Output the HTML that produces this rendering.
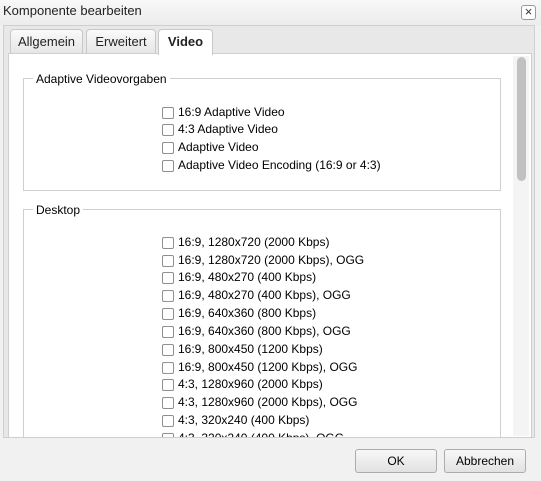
<html><head><style>
body{margin:0;width:541px;height:480px;background:#f1f1f1;font-family:"Liberation Sans",sans-serif;font-size:12px;color:#000;position:relative;overflow:hidden}
.a{position:absolute}
.cb{position:absolute;left:162px;width:10px;height:10px;border:1px solid #8f8f8f;border-radius:2px;background:#fff}
.lb{position:absolute;left:178px;white-space:nowrap}
.tab{position:absolute;top:29px;height:23px;border:1px solid #c8c8c8;border-bottom:none;border-radius:4px 4px 0 0;background:linear-gradient(#fafafa,#e6e6e6);text-align:center;line-height:23px;font-size:13px;color:#222}
.btn{position:absolute;top:449px;height:22px;border:1px solid #acacac;border-radius:3px;background:linear-gradient(#f7f7f7,#e2e2e2);text-align:center;line-height:22px;font-size:12px}
</style></head><body>
<div class="a" style="left:0;top:0;width:541px;height:25px;background:linear-gradient(#f8f8f8,#ececec)"></div>
<div class="a" style="left:3px;top:3px;font-size:13px;color:#222">Komponente bearbeiten</div>
<div class="a" style="left:521px;top:5px;width:13px;height:13px;border:1px solid #999;border-radius:3px;background:#fff;text-align:center;line-height:12px;font-size:13px;color:#333">×</div>
<div class="a" style="left:3px;top:25px;width:530px;height:413px;border:1px solid #cfcfcf;background:#e8e8e8"></div>
<div class="tab" style="left:10px;width:71px">Allgemein</div>
<div class="tab" style="left:86px;width:68px">Erweitert</div>
<div class="tab" style="left:158px;width:53px;background:#fff;font-weight:bold;height:25px;z-index:2">Video</div>
<div class="a" style="left:8px;top:53px;width:522px;height:383px;border:1px solid #cfcfcf;background:#fff"></div>
<div class="a" style="left:513px;top:56px;width:16px;height:380px;background:#f4f4f4"></div>
<div class="a" style="left:517px;top:57px;width:9px;height:124px;border-radius:5px;background:#c1c1c1"></div>
<div class="a" style="left:23px;top:78px;width:476px;height:111px;border:1px solid #cfcfcf"></div>
<div class="a" style="left:33px;top:72px;background:#fff;padding:0 3px">Adaptive Videovorgaben</div>
<div class="a" style="left:23px;top:209px;width:476px;height:240px;border:1px solid #cfcfcf"></div>
<div class="a" style="left:33px;top:203px;background:#fff;padding:0 3px">Desktop</div>
<div class="cb" style="top:107px"></div><div class="lb" style="top:105px">16:9 Adaptive Video</div>
<div class="cb" style="top:124px"></div><div class="lb" style="top:122px">4:3 Adaptive Video</div>
<div class="cb" style="top:142px"></div><div class="lb" style="top:140px">Adaptive Video</div>
<div class="cb" style="top:160px"></div><div class="lb" style="top:158px">Adaptive Video Encoding (16:9 or 4:3)</div>
<div class="cb" style="top:237px"></div><div class="lb" style="top:235px">16:9, 1280x720 (2000 Kbps)</div>
<div class="cb" style="top:255px"></div><div class="lb" style="top:253px">16:9, 1280x720 (2000 Kbps), OGG</div>
<div class="cb" style="top:272px"></div><div class="lb" style="top:270px">16:9, 480x270 (400 Kbps)</div>
<div class="cb" style="top:290px"></div><div class="lb" style="top:288px">16:9, 480x270 (400 Kbps), OGG</div>
<div class="cb" style="top:308px"></div><div class="lb" style="top:306px">16:9, 640x360 (800 Kbps)</div>
<div class="cb" style="top:326px"></div><div class="lb" style="top:324px">16:9, 640x360 (800 Kbps), OGG</div>
<div class="cb" style="top:344px"></div><div class="lb" style="top:342px">16:9, 800x450 (1200 Kbps)</div>
<div class="cb" style="top:362px"></div><div class="lb" style="top:360px">16:9, 800x450 (1200 Kbps), OGG</div>
<div class="cb" style="top:379px"></div><div class="lb" style="top:377px">4:3, 1280x960 (2000 Kbps)</div>
<div class="cb" style="top:397px"></div><div class="lb" style="top:395px">4:3, 1280x960 (2000 Kbps), OGG</div>
<div class="cb" style="top:415px"></div><div class="lb" style="top:413px">4:3, 320x240 (400 Kbps)</div>
<div class="cb" style="top:433px"></div><div class="lb" style="top:431px">4:3, 320x240 (400 Kbps), OGG</div>
<div class="a" style="left:3px;top:437px;width:532px;height:43px;background:#f1f1f1;border-top:1px solid #cfcfcf"></div>
<div class="btn" style="left:355px;width:80px">OK</div>
<div class="btn" style="left:444px;width:80px">Abbrechen</div>
</body></html>
